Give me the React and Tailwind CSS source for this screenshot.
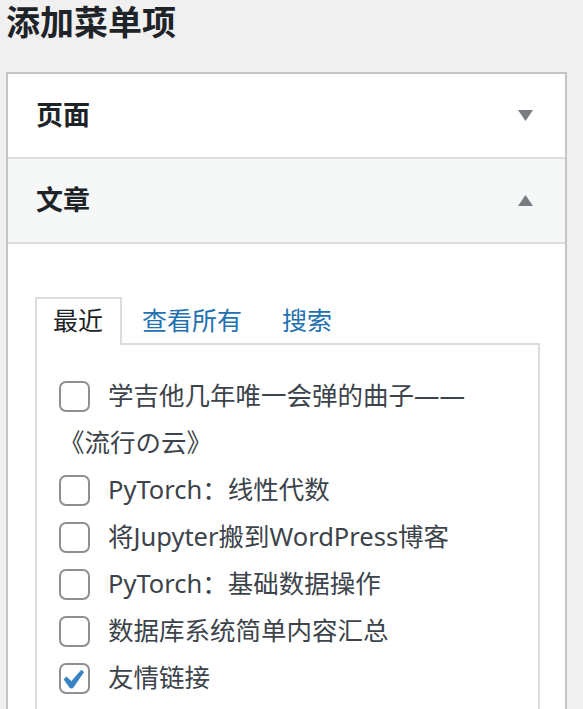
const posts = [
  { title: "学吉他几年唯一会弹的曲子——", wrap: "《流行の云》" },
  { title: "PyTorch：线性代数" },
  { title: "将Jupyter搬到WordPress博客" },
  { title: "PyTorch：基础数据操作" },
  { title: "数据库系统简单内容汇总" },
  { title: "友情链接", checked: true },
];

function Caret({ up }) {
  return (
    <svg width="15" height="11" viewBox="0 0 15 11" className="shrink-0">
      <polygon points={up ? "7.5,0 15,11 0,11" : "0,0 15,0 7.5,11"} fill="#787c82" />
    </svg>
  );
}

function Checkbox({ checked }) {
  return (
    <span className="relative inline-block w-[31px] h-[31px] bg-white border-2 border-[#8c8f94] rounded-[7px] align-middle mr-[18px] -mt-[4px]">
      {checked && (
        <svg width="38" height="38" viewBox="0 0 20 20" className="absolute -left-[8px] -top-[4px]">
          <path d="M14.83 4.89l1.34.94-5.81 8.38H9.02L5.78 9.67l1.34-1.25 2.57 2.4z" fill="#3582c4" stroke="#3582c4" strokeWidth="0.4" />
        </svg>
      )}
    </span>
  );
}

export default function App() {
  return (
    <div
      className="min-h-screen bg-[#f0f0f1] px-[6px] pt-[3px] overflow-hidden"
      style={{ fontFamily: '"Noto Sans", "Noto Sans CJK SC", sans-serif' }}
    >
      <h2 className="text-[34px] font-bold leading-[38px] text-[#1d2327]">添加菜单项</h2>

      <div className="mt-[31px] w-[561px] border-2 border-[#c3c4c7] bg-white">
        {/* 页面 */}
        <div className="h-[85px] flex items-center justify-between pl-[28px] pr-[32px] border-b-2 border-[#dcdcde]">
          <h3 className="text-[27px] font-bold text-[#1d2327]">页面</h3>
          <Caret />
        </div>

        {/* 文章 */}
        <div className="h-[85px] flex items-center justify-between pl-[28px] pr-[32px] bg-[#f6f7f7] border-b-2 border-[#dcdcde]">
          <h3 className="text-[27px] font-bold text-[#1d2327]">文章</h3>
          <Caret up />
        </div>

        <div className="pt-[53px] pl-[27px] pr-[25px]">
          <ul className="flex text-[25px] leading-[42px]">
            <li className="relative z-10 -mb-[2px] w-[87px] h-[48px] pl-[16px] border-2 border-b-0 border-[#dcdcde] bg-white text-[#1d2327]">
              最近
            </li>
            <li className="px-[20px] pt-[2px] text-[#2271b1]">查看所有</li>
            <li className="px-[20px] pt-[2px] text-[#2271b1]">搜索</li>
          </ul>

          <div className="border-2 border-[#dcdcde] bg-white pt-[27px] pl-[22px] pr-[22px] pb-[40px]">
            <ul className="text-[25.5px] leading-[47px] text-[#3c434a]">
              {posts.map((p) => (
                <li key={p.title}>
                  <label>
                    <Checkbox checked={p.checked} />
                    {p.title}
                    {p.wrap && (
                      <>
                        <br />
                        {p.wrap}
                      </>
                    )}
                  </label>
                </li>
              ))}
            </ul>
          </div>
        </div>
      </div>
    </div>
  );
}
